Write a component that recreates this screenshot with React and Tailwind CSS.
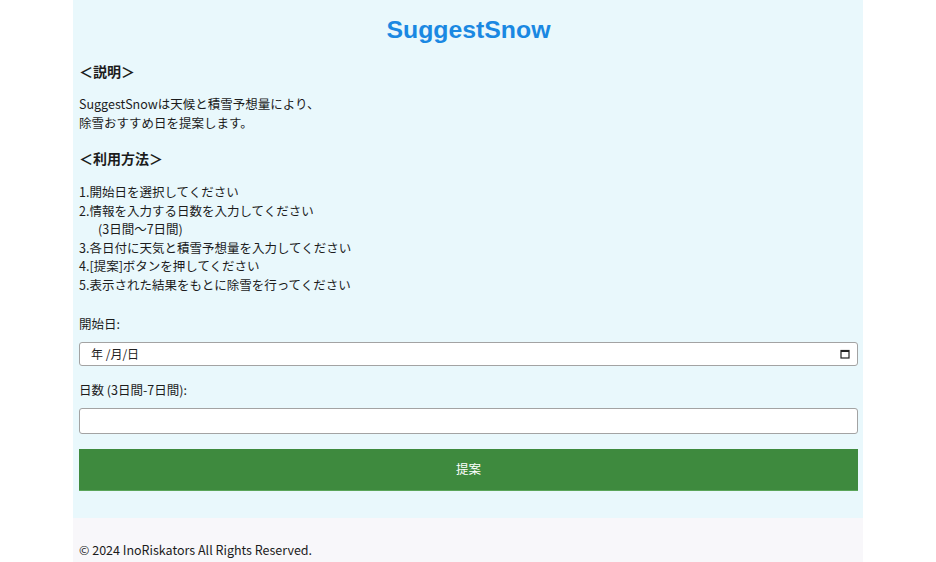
import React from "react";

const howTo = [
  "1.開始日を選択してください",
  "2.情報を入力する日数を入力してください",
  "(3日間〜7日間)",
  "3.各日付に天気と積雪予想量を入力してください",
  "4.[提案]ボタンを押してください",
  "5.表示された結果をもとに除雪を行ってください",
];

const CalendarIcon = () => (
  <svg width="10" height="10" viewBox="0 0 10 10" fill="none">
    <rect x="1" y="1.5" width="8" height="7.5" stroke="#222" strokeWidth="1.2" />
    <rect x="1" y="1" width="8" height="2" fill="#222" />
  </svg>
);

const App = () => {
  return (
    <div className="bg-white min-h-screen">
      <div
        className="w-[790px] mx-auto text-[#1c1c1c] text-[12.5px]"
        style={{ fontFamily: '"Noto Sans CJK JP", "Noto Sans", sans-serif' }}
      >
        <main className="bg-[#e9f8fc] pt-[15px] pb-[27px] pl-[6px] pr-[5px]">
          <h1
            className="text-center text-[24.8px] leading-[30px] font-bold text-[#1a88e2]"
            style={{ fontFamily: '"Liberation Sans", Arial, sans-serif' }}
          >
            SuggestSnow
          </h1>

          {/* 説明 */}
          <h2 className="mt-[16px] text-[14px] leading-[20px] font-bold">＜説明＞</h2>
          <p className="mt-[13px] leading-[19px]">
            SuggestSnowは天候と積雪予想量により、
            <br />
            除雪おすすめ日を提案します。
          </p>

          {/* 利用方法 */}
          <h2 className="mt-[16px] text-[14px] leading-[20px] font-bold">＜利用方法＞</h2>
          <ul className="mt-[15px] leading-[18.6px]">
            {howTo.map((line, idx) => (
              <li key={idx} className={idx === 2 ? "pl-[19px]" : ""}>
                {line}
              </li>
            ))}
          </ul>

          {/* form */}
          <label className="block mt-[20px] leading-[18.6px]">開始日:</label>
          <div className="mt-[9px] h-[24px] bg-white border border-[#a3a3a3] rounded-[3px] flex items-center justify-between pl-[11px] pr-[7px]">
            <span className="text-[12px] text-[#222]">年 /月/日</span>
            <CalendarIcon />
          </div>

          <label className="block mt-[15px] leading-[18.6px]">日数 (3日間-7日間):</label>
          <input
            type="number"
            className="mt-[8px] block w-full h-[26px] bg-white border border-[#a3a3a3] rounded-[3px] px-2 outline-none"
          />

          <button className="mt-[15px] w-full h-[42px] bg-[#3e8a3e] border-b border-[#5aa55a] text-white text-[12.5px]">
            提案
          </button>
        </main>

        <footer className="bg-[#f8f7fa] pt-[23px] pb-[20px] pl-[6px] leading-[18.6px]">
          © 2024 InoRiskators All Rights Reserved.
        </footer>
      </div>
    </div>
  );
};

export default App;
